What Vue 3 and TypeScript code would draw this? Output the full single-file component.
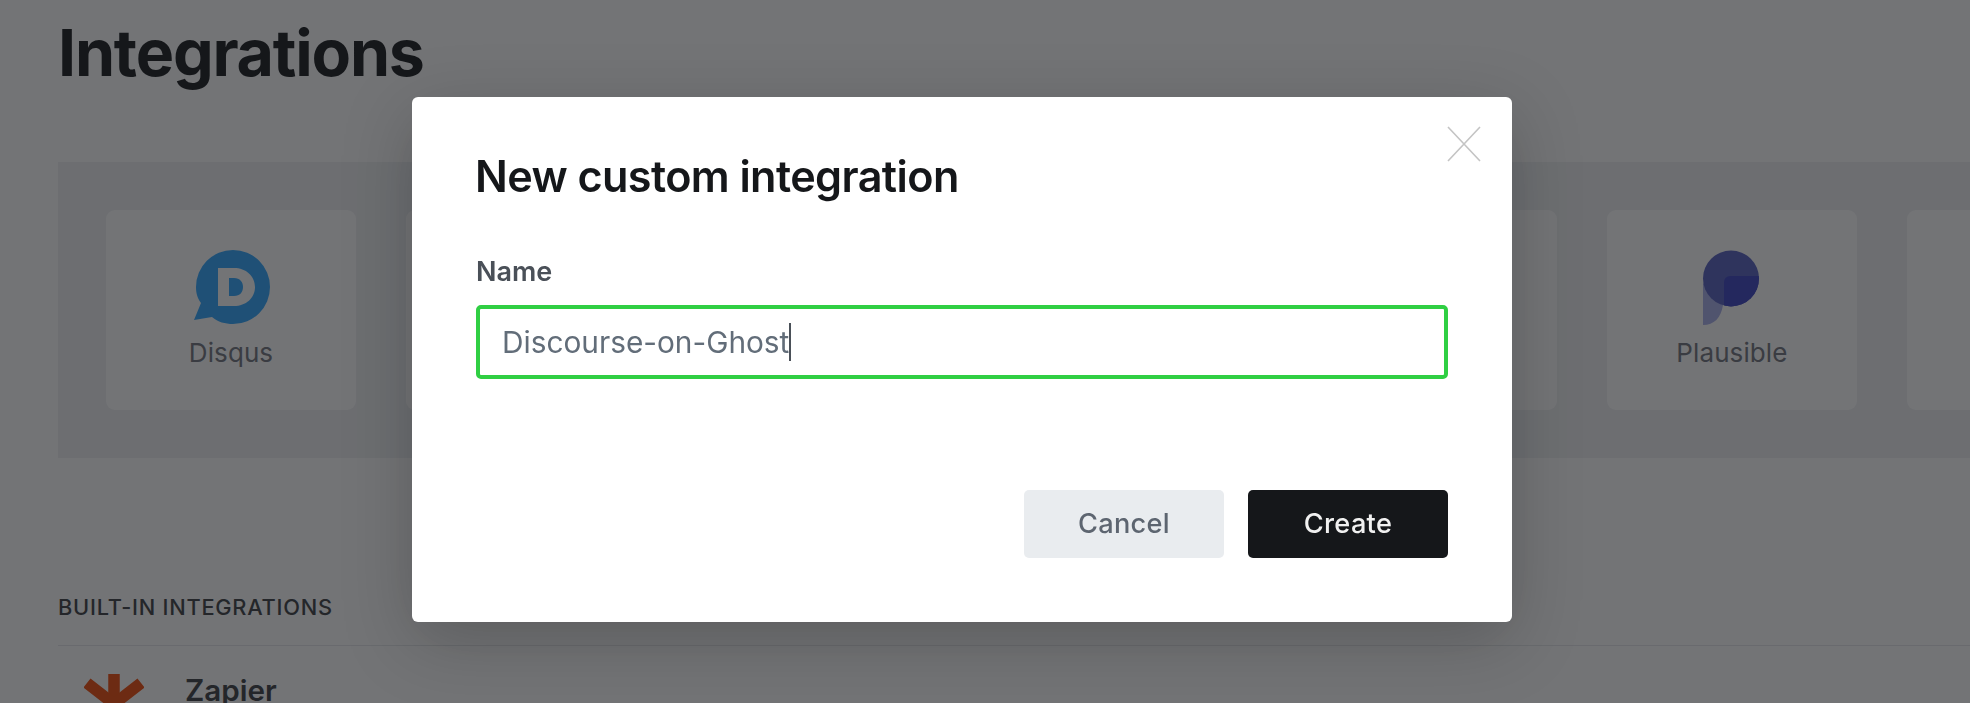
<script setup lang="ts">
import { ref } from 'vue'

const name = ref('Discourse-on-Ghost')
const cards = ['Disqus', '', '', '', '', 'Plausible', '']
</script>

<template>
  <div class="page">
    <h1 class="title">Integrations</h1>

    <section class="panel">
      <div v-for="(card, i) in cards" :key="i" class="card">
        <svg v-if="card === 'Disqus'" class="logo logo-disqus" width="80" height="80" viewBox="0 0 80 80">
          <path
            fill="#2ea6ff"
            fill-rule="evenodd"
            d="M40 3A37 37 0 1 1 40 77C32 77 25 75 19 70L1 73L8 56C4 51 3 45 3 40A37 37 0 0 1 40 3ZM25 21H41C53 21 62 29 62 40C62 51 53 59 41 59H25ZM36 31V49H41C47 49 50 45 50 40C50 35 47 31 41 31Z"
          />
        </svg>
        <svg v-else-if="card === 'Plausible'" class="logo logo-plausible" width="64" height="80" viewBox="0 0 64 80">
          <defs>
            <clipPath id="plausible-disc"><circle cx="32" cy="31.5" r="28" /></clipPath>
          </defs>
          <path fill="#a8aeea" d="M4 36V78C15 78 22 71 24 58Z" />
          <circle cx="32" cy="31.5" r="28" fill="#5660c0" />
          <rect x="25" y="29" width="40" height="40" rx="6" fill="#3a42c4" clip-path="url(#plausible-disc)" />
        </svg>
        <span v-if="card" class="card-label">{{ card }}</span>
      </div>
    </section>

    <h2 class="section-label">BUILT-IN INTEGRATIONS</h2>
    <div class="row">
      <svg class="row-icon" width="60" height="60" viewBox="0 0 60 60">
        <g stroke="#f04a08" stroke-width="11.5" fill="none">
          <path d="M30 0V30" />
          <path d="M3 9L30 30L57 9" />
        </g>
      </svg>
      <span class="row-name">Zapier</span>
    </div>
  </div>

  <div class="scrim">
    <div class="modal">
      <svg class="close" width="34" height="36" viewBox="0 0 34 36">
        <path d="M1 1L33 35M33 1L1 35" stroke="#c4c4c4" stroke-width="1.6" fill="none" />
      </svg>
      <h3 class="modal-title">New custom integration</h3>
      <label class="field-label">Name</label>
      <div class="input">
        <span class="input-text">{{ name }}</span><span class="caret"></span>
      </div>
      <div class="actions">
        <button class="btn btn-cancel">Cancel</button>
        <button class="btn btn-create">Create</button>
      </div>
    </div>
  </div>
</template>

<style>
html,
body {
  margin: 0;
  height: 703px;
  overflow: hidden;
  background: #fff;
}
</style>

<style scoped>
.page {
  height: 703px;
  box-sizing: border-box;
  padding-left: 58px;
  overflow: hidden;
  font-family: Inter, "Liberation Sans", sans-serif;
  color: #15171a;
}
.title {
  margin: 0 0 68px;
  height: 94px;
  font-size: 64.5px;
  line-height: 106px;
  font-weight: 700;
  letter-spacing: -1.2px;
}
.panel {
  display: flex;
  gap: 50.2px;
  width: 2200px;
  height: 296px;
  box-sizing: border-box;
  padding: 48px;
  background: #eff1f3;
}
.card {
  flex: 0 0 250px;
  height: 200px;
  box-sizing: border-box;
  display: flex;
  flex-direction: column;
  align-items: center;
  padding-top: 37px;
  background: #ffffff;
  border-radius: 9px;
}
.logo {
  display: block;
  height: 80px;
}
.logo-disqus {
  margin-left: 3px;
}
.logo-plausible {
  margin-left: -2px;
}
.card-label {
  margin-top: 11px;
  font-size: 26px;
  line-height: 30px;
  color: #70747d;
  letter-spacing: 0.1px;
}
.section-label {
  margin: 135px 0 0;
  height: 52px;
  font-size: 21.8px;
  line-height: 28px;
  font-weight: 500;
  letter-spacing: 0.75px;
  color: #3a3d42;
  border-bottom: 1px solid #e5e7ea;
}
.row {
  display: flex;
  align-items: flex-start;
  gap: 41px;
  padding-top: 28px;
  padding-left: 26px;
}
.row-icon {
  flex: none;
}
.row-name {
  margin-top: -2px;
  font-size: 29.6px;
  line-height: 36px;
  font-weight: 600;
  color: #3a3d42;
}
.scrim {
  position: fixed;
  inset: 0;
  padding: 97px 0 0 412px;
  background: rgba(21, 23, 26, 0.6);
  font-family: Inter, "Liberation Sans", sans-serif;
}
.modal {
  position: relative;
  width: 1100px;
  height: 525px;
  box-sizing: border-box;
  padding: 54px 64px 0;
  background: #fff;
  border-radius: 6px;
  box-shadow: 0 18px 70px rgba(0, 0, 0, 0.22);
}
.close {
  position: absolute;
  top: 29px;
  right: 31px;
}
.modal-title {
  margin: 0 0 0 -1px;
  font-size: 43.2px;
  line-height: 50px;
  font-weight: 600;
  letter-spacing: -0.6px;
  color: #15171a;
}
.field-label {
  display: block;
  margin-top: 55px;
  font-size: 27px;
  line-height: 32px;
  font-weight: 600;
  color: #4a5058;
}
.input {
  display: flex;
  align-items: center;
  height: 74px;
  margin-top: 17px;
  box-sizing: border-box;
  padding-left: 22px;
  border: 4px solid #30cf43;
  border-radius: 5px;
}
.input-text {
  font-size: 29.8px;
  color: #626d79;
}
.caret {
  width: 2px;
  height: 38px;
  background: #4a5058;
}
.actions {
  display: flex;
  justify-content: flex-end;
  gap: 24px;
  margin-top: 111px;
}
.btn {
  width: 200px;
  height: 68px;
  padding: 0 0 2px;
  border: 0;
  border-radius: 5px;
  font-family: inherit;
  font-size: 27.2px;
  font-weight: 500;
  letter-spacing: 0.3px;
}
.btn-cancel {
  background: #e9ecef;
  color: #5d6570;
}
.btn-create {
  background: #15171a;
  color: #f1f1f1;
}
</style>
